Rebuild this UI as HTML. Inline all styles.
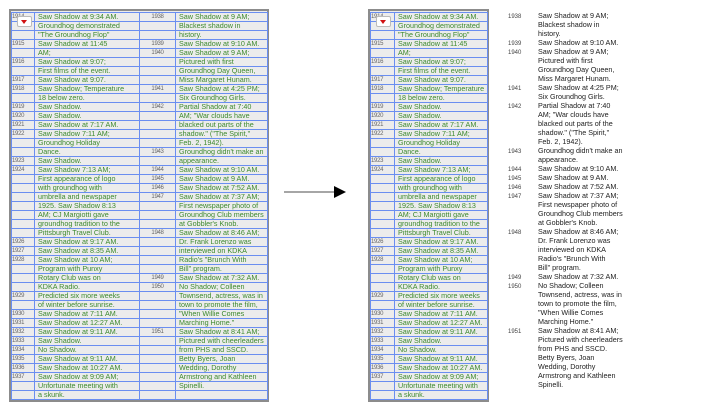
<!DOCTYPE html>
<html><head><meta charset="utf-8"><style>
body{margin:0;width:714px;height:409px;background:#fff;position:relative;overflow:hidden;font-family:"Liberation Sans",sans-serif}
.frame{position:absolute;border:2px solid #8c8c8c;background:#ececec}
table{border-collapse:collapse;table-layout:fixed}
td{height:8px;padding:0 0 0 3px;border:1px solid #6a8ef0;font-size:7.2px;line-height:8px;white-space:nowrap;overflow:hidden;color:#3d8a2e;vertical-align:middle}
td.y{font-size:6px;color:#666;padding-left:0;letter-spacing:-0.3px}
.plain{position:absolute;left:508px;top:11px;font-size:7.2px;color:#222}
.plain div{height:9px;line-height:9px;white-space:nowrap}
.plain span{display:inline-block;width:30px;font-size:6px;color:#444}
.btn{position:absolute;width:13px;height:9px;background:#fff;border:1px solid #bbb;border-radius:2px}
.btn:after{content:"";position:absolute;left:3px;top:3px;border-left:3.5px solid transparent;border-right:3.5px solid transparent;border-top:4px solid #d01010}
</style></head><body>

<div class="frame" style="left:9px;top:9px;width:256px;height:389px;">
<table style="width:256px;margin-top:1px">
<colgroup><col style="width:23px"><col style="width:105px"><col style="width:36px"><col style="width:92px"></colgroup>
<tr><td class="y">1914</td><td>Saw Shadow at 9:34 AM.</td><td class="y" style="text-align:center">1938</td><td>Saw Shadow at 9 AM;</td></tr>
<tr><td class="y"></td><td>Groundhog demonstrated</td><td class="y"></td><td>Blackest shadow in</td></tr>
<tr><td class="y"></td><td>"The Groundhog Flop"</td><td class="y"></td><td>history.</td></tr>
<tr><td class="y">1915</td><td>Saw Shadow at 11:45</td><td class="y" style="text-align:center">1939</td><td>Saw Shadow at 9:10 AM.</td></tr>
<tr><td class="y"></td><td>AM;</td><td class="y" style="text-align:center">1940</td><td>Saw Shadow at 9 AM;</td></tr>
<tr><td class="y">1916</td><td>Saw Shadow at 9:07;</td><td class="y"></td><td>Pictured with first</td></tr>
<tr><td class="y"></td><td>First films of the event.</td><td class="y"></td><td>Groundhog Day Queen,</td></tr>
<tr><td class="y">1917</td><td>Saw Shadow at 9:07.</td><td class="y"></td><td>Miss Margaret Hunam.</td></tr>
<tr><td class="y">1918</td><td>Saw Shadow; Temperature</td><td class="y" style="text-align:center">1941</td><td>Saw Shadow at 4:25 PM;</td></tr>
<tr><td class="y"></td><td>18 below zero.</td><td class="y"></td><td>Six Groundhog Girls.</td></tr>
<tr><td class="y">1919</td><td>Saw Shadow.</td><td class="y" style="text-align:center">1942</td><td>Partial Shadow at 7:40</td></tr>
<tr><td class="y">1920</td><td>Saw Shadow.</td><td class="y"></td><td>AM; "War clouds have</td></tr>
<tr><td class="y">1921</td><td>Saw Shadow at 7:17 AM.</td><td class="y"></td><td>blacked out parts of the</td></tr>
<tr><td class="y">1922</td><td>Saw Shadow 7:11 AM;</td><td class="y"></td><td>shadow." ("The Spirit,"</td></tr>
<tr><td class="y"></td><td>Groundhog Holiday</td><td class="y"></td><td>Feb. 2, 1942).</td></tr>
<tr><td class="y"></td><td>Dance.</td><td class="y" style="text-align:center">1943</td><td>Groundhog didn't make an</td></tr>
<tr><td class="y">1923</td><td>Saw Shadow.</td><td class="y"></td><td>appearance.</td></tr>
<tr><td class="y">1924</td><td>Saw Shadow 7:13 AM;</td><td class="y" style="text-align:center">1944</td><td>Saw Shadow at 9:10 AM.</td></tr>
<tr><td class="y"></td><td>First appearance of logo</td><td class="y" style="text-align:center">1945</td><td>Saw Shadow at 9 AM.</td></tr>
<tr><td class="y"></td><td>with groundhog with</td><td class="y" style="text-align:center">1946</td><td>Saw Shadow at 7:52 AM.</td></tr>
<tr><td class="y"></td><td>umbrella and newspaper</td><td class="y" style="text-align:center">1947</td><td>Saw Shadow at 7:37 AM;</td></tr>
<tr><td class="y"></td><td>1925. Saw Shadow 8:13</td><td class="y"></td><td>First newspaper photo of</td></tr>
<tr><td class="y"></td><td>AM; CJ Margiotti gave</td><td class="y"></td><td>Groundhog Club members</td></tr>
<tr><td class="y"></td><td>groundhog tradition to the</td><td class="y"></td><td>at Gobbler's Knob.</td></tr>
<tr><td class="y"></td><td>Pittsburgh Travel Club.</td><td class="y" style="text-align:center">1948</td><td>Saw Shadow at 8:46 AM;</td></tr>
<tr><td class="y">1926</td><td>Saw Shadow at 9:17 AM.</td><td class="y"></td><td>Dr. Frank Lorenzo was</td></tr>
<tr><td class="y">1927</td><td>Saw Shadow at 8:35 AM.</td><td class="y"></td><td>interviewed on KDKA</td></tr>
<tr><td class="y">1928</td><td>Saw Shadow at 10 AM;</td><td class="y"></td><td>Radio's "Brunch With</td></tr>
<tr><td class="y"></td><td>Program with Punxy</td><td class="y"></td><td>Bill" program.</td></tr>
<tr><td class="y"></td><td>Rotary Club was on</td><td class="y" style="text-align:center">1949</td><td>Saw Shadow at 7:32 AM.</td></tr>
<tr><td class="y"></td><td>KDKA Radio.</td><td class="y" style="text-align:center">1950</td><td>No Shadow; Colleen</td></tr>
<tr><td class="y">1929</td><td>Predicted six more weeks</td><td class="y"></td><td>Townsend, actress, was in</td></tr>
<tr><td class="y"></td><td>of winter before sunrise.</td><td class="y"></td><td>town to promote the film,</td></tr>
<tr><td class="y">1930</td><td>Saw Shadow at 7:11 AM.</td><td class="y"></td><td>"When Willie Comes</td></tr>
<tr><td class="y">1931</td><td>Saw Shadow at 12:27 AM.</td><td class="y"></td><td>Marching Home."</td></tr>
<tr><td class="y">1932</td><td>Saw Shadow at 9:11 AM.</td><td class="y" style="text-align:center">1951</td><td>Saw Shadow at 8:41 AM;</td></tr>
<tr><td class="y">1933</td><td>Saw Shadow.</td><td class="y"></td><td>Pictured with cheerleaders</td></tr>
<tr><td class="y">1934</td><td>No Shadow.</td><td class="y"></td><td>from PHS and SSCD.</td></tr>
<tr><td class="y">1935</td><td>Saw Shadow at 9:11 AM.</td><td class="y"></td><td>Betty Byers, Joan</td></tr>
<tr><td class="y">1936</td><td>Saw Shadow at 10:27 AM.</td><td class="y"></td><td>Wedding, Dorothy</td></tr>
<tr><td class="y">1937</td><td>Saw Shadow at 9:09 AM;</td><td class="y"></td><td>Armstrong and Kathleen</td></tr>
<tr><td class="y"></td><td>Unfortunate meeting with</td><td class="y"></td><td>Spinelli.</td></tr>
<tr><td class="y"></td><td>a skunk.</td><td class="y"></td><td></td></tr>
</table>
<div class="btn" style="left:6px;top:5px"></div>
</div>

<svg style="position:absolute;left:280px;top:182px" width="70" height="20">
<line x1="4" y1="10" x2="56" y2="10" stroke="#888" stroke-width="1.5"/>
<polygon points="54,4 66,10 54,16" fill="#000"/>
</svg>

<div class="frame" style="left:368px;top:9px;width:117px;height:389px;">
<table style="width:117px;margin-top:1px">
<colgroup><col style="width:24px"><col style="width:93px"></colgroup>
<tr><td class="y">1914</td><td>Saw Shadow at 9:34 AM.</td></tr>
<tr><td class="y"></td><td>Groundhog demonstrated</td></tr>
<tr><td class="y"></td><td>"The Groundhog Flop"</td></tr>
<tr><td class="y">1915</td><td>Saw Shadow at 11:45</td></tr>
<tr><td class="y"></td><td>AM;</td></tr>
<tr><td class="y">1916</td><td>Saw Shadow at 9:07;</td></tr>
<tr><td class="y"></td><td>First films of the event.</td></tr>
<tr><td class="y">1917</td><td>Saw Shadow at 9:07.</td></tr>
<tr><td class="y">1918</td><td>Saw Shadow; Temperature</td></tr>
<tr><td class="y"></td><td>18 below zero.</td></tr>
<tr><td class="y">1919</td><td>Saw Shadow.</td></tr>
<tr><td class="y">1920</td><td>Saw Shadow.</td></tr>
<tr><td class="y">1921</td><td>Saw Shadow at 7:17 AM.</td></tr>
<tr><td class="y">1922</td><td>Saw Shadow 7:11 AM;</td></tr>
<tr><td class="y"></td><td>Groundhog Holiday</td></tr>
<tr><td class="y"></td><td>Dance.</td></tr>
<tr><td class="y">1923</td><td>Saw Shadow.</td></tr>
<tr><td class="y">1924</td><td>Saw Shadow 7:13 AM;</td></tr>
<tr><td class="y"></td><td>First appearance of logo</td></tr>
<tr><td class="y"></td><td>with groundhog with</td></tr>
<tr><td class="y"></td><td>umbrella and newspaper</td></tr>
<tr><td class="y"></td><td>1925. Saw Shadow 8:13</td></tr>
<tr><td class="y"></td><td>AM; CJ Margiotti gave</td></tr>
<tr><td class="y"></td><td>groundhog tradition to the</td></tr>
<tr><td class="y"></td><td>Pittsburgh Travel Club.</td></tr>
<tr><td class="y">1926</td><td>Saw Shadow at 9:17 AM.</td></tr>
<tr><td class="y">1927</td><td>Saw Shadow at 8:35 AM.</td></tr>
<tr><td class="y">1928</td><td>Saw Shadow at 10 AM;</td></tr>
<tr><td class="y"></td><td>Program with Punxy</td></tr>
<tr><td class="y"></td><td>Rotary Club was on</td></tr>
<tr><td class="y"></td><td>KDKA Radio.</td></tr>
<tr><td class="y">1929</td><td>Predicted six more weeks</td></tr>
<tr><td class="y"></td><td>of winter before sunrise.</td></tr>
<tr><td class="y">1930</td><td>Saw Shadow at 7:11 AM.</td></tr>
<tr><td class="y">1931</td><td>Saw Shadow at 12:27 AM.</td></tr>
<tr><td class="y">1932</td><td>Saw Shadow at 9:11 AM.</td></tr>
<tr><td class="y">1933</td><td>Saw Shadow.</td></tr>
<tr><td class="y">1934</td><td>No Shadow.</td></tr>
<tr><td class="y">1935</td><td>Saw Shadow at 9:11 AM.</td></tr>
<tr><td class="y">1936</td><td>Saw Shadow at 10:27 AM.</td></tr>
<tr><td class="y">1937</td><td>Saw Shadow at 9:09 AM;</td></tr>
<tr><td class="y"></td><td>Unfortunate meeting with</td></tr>
<tr><td class="y"></td><td>a skunk.</td></tr>
</table>
<div class="btn" style="left:6px;top:5px"></div>
</div>

<div class="plain">
<div><span>1938</span>Saw Shadow at 9 AM;</div>
<div><span></span>Blackest shadow in</div>
<div><span></span>history.</div>
<div><span>1939</span>Saw Shadow at 9:10 AM.</div>
<div><span>1940</span>Saw Shadow at 9 AM;</div>
<div><span></span>Pictured with first</div>
<div><span></span>Groundhog Day Queen,</div>
<div><span></span>Miss Margaret Hunam.</div>
<div><span>1941</span>Saw Shadow at 4:25 PM;</div>
<div><span></span>Six Groundhog Girls.</div>
<div><span>1942</span>Partial Shadow at 7:40</div>
<div><span></span>AM; "War clouds have</div>
<div><span></span>blacked out parts of the</div>
<div><span></span>shadow." ("The Spirit,"</div>
<div><span></span>Feb. 2, 1942).</div>
<div><span>1943</span>Groundhog didn't make an</div>
<div><span></span>appearance.</div>
<div><span>1944</span>Saw Shadow at 9:10 AM.</div>
<div><span>1945</span>Saw Shadow at 9 AM.</div>
<div><span>1946</span>Saw Shadow at 7:52 AM.</div>
<div><span>1947</span>Saw Shadow at 7:37 AM;</div>
<div><span></span>First newspaper photo of</div>
<div><span></span>Groundhog Club members</div>
<div><span></span>at Gobbler's Knob.</div>
<div><span>1948</span>Saw Shadow at 8:46 AM;</div>
<div><span></span>Dr. Frank Lorenzo was</div>
<div><span></span>interviewed on KDKA</div>
<div><span></span>Radio's "Brunch With</div>
<div><span></span>Bill" program.</div>
<div><span>1949</span>Saw Shadow at 7:32 AM.</div>
<div><span>1950</span>No Shadow; Colleen</div>
<div><span></span>Townsend, actress, was in</div>
<div><span></span>town to promote the film,</div>
<div><span></span>"When Willie Comes</div>
<div><span></span>Marching Home."</div>
<div><span>1951</span>Saw Shadow at 8:41 AM;</div>
<div><span></span>Pictured with cheerleaders</div>
<div><span></span>from PHS and SSCD.</div>
<div><span></span>Betty Byers, Joan</div>
<div><span></span>Wedding, Dorothy</div>
<div><span></span>Armstrong and Kathleen</div>
<div><span></span>Spinelli.</div>
</div>
</body></html>
